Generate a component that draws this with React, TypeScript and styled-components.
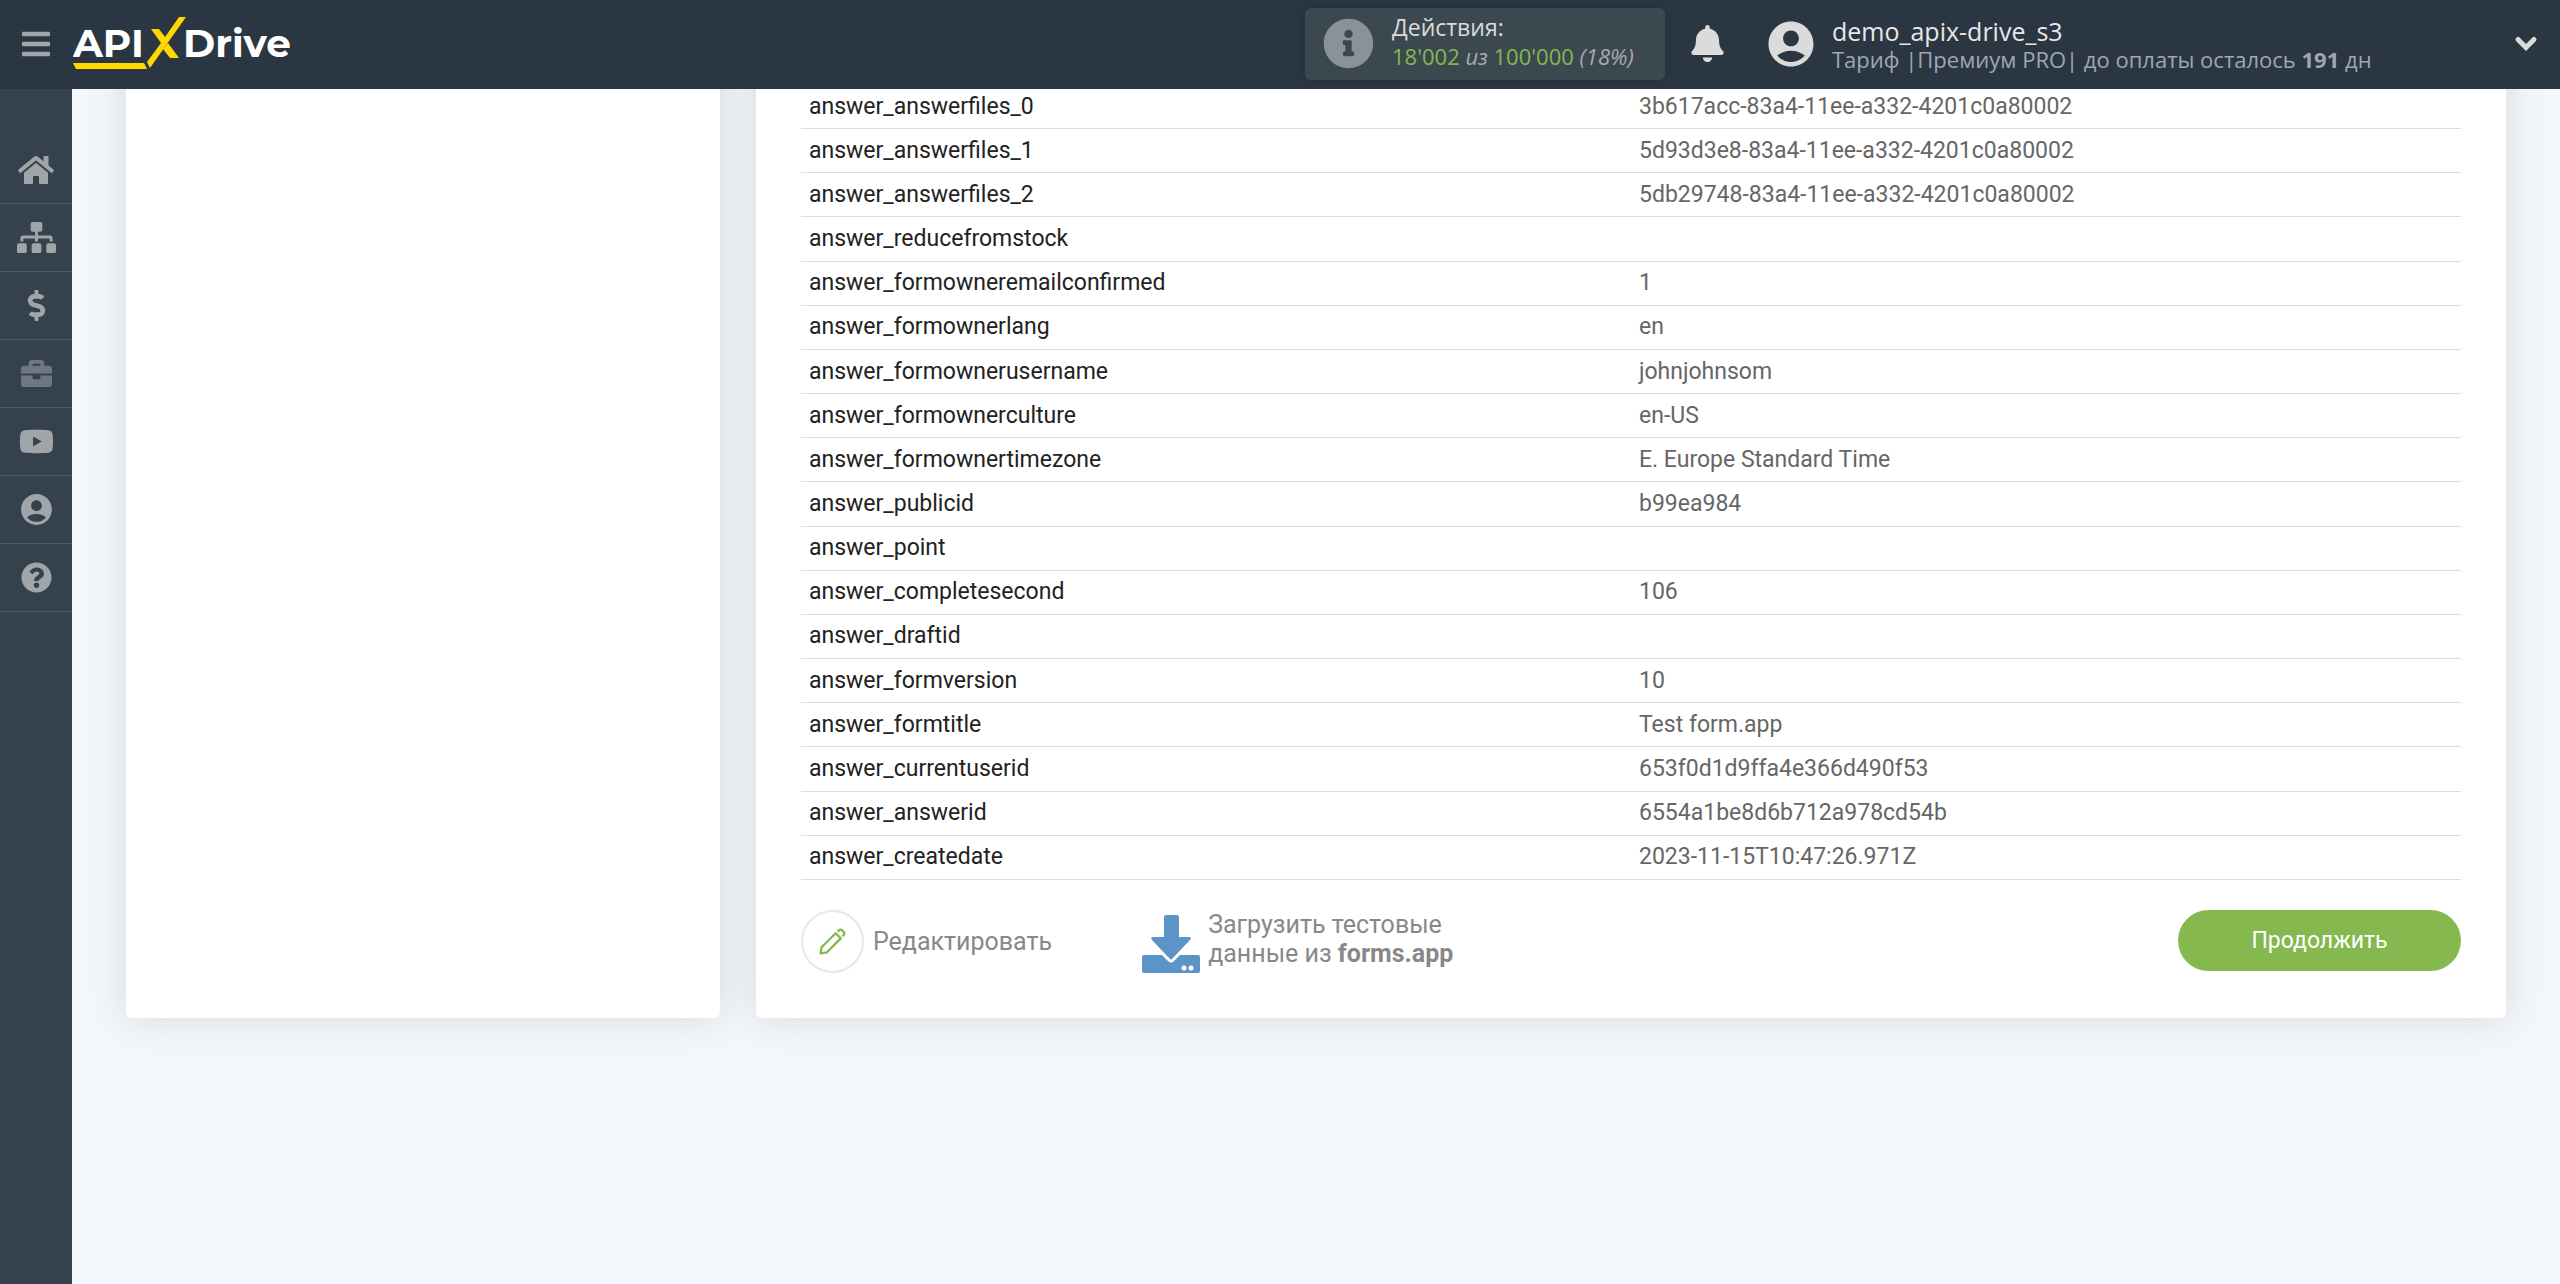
import React from "react";
import styled, { createGlobalStyle } from "styled-components";
import {
  FaBars,
  FaBell,
  FaBriefcase,
  FaDollarSign,
  FaHome,
  FaInfoCircle,
  FaQuestionCircle,
  FaSitemap,
  FaYoutube,
} from "react-icons/fa";
import { MdAccountCircle } from "react-icons/md";

const GlobalStyle = createGlobalStyle`
  *, *::before, *::after { box-sizing: border-box; }
  body {
    margin: 0;
    background: #f3f6fb;
    color: #666;
    font: 25px/36px Roboto, "Open Sans", sans-serif;
  }
  button { font: inherit; color: inherit; border: 0; padding: 0; background: none; cursor: pointer; }
  a { color: inherit; text-decoration: none; }
`;

const Page = styled.div`
  display: flex;
  min-height: 100vh;
`;

const TopBar = styled.header`
  position: fixed;
  z-index: 2;
  inset: 0 0 auto;
  display: flex;
  align-items: center;
  height: 89px;
  padding: 0 22px 2px 20px;
  background: #2b3643;
  color: #dbdbdb;
  font-family: "Open Sans", "Noto Sans", sans-serif;
`;

const MenuButton = styled.button`
  display: flex;
  margin-right: 21px;
  color: #a0a5a9;
`;

const Brand = styled.a`
  display: flex;
  margin-right: auto;
`;

const Usage = styled.section`
  display: flex;
  align-items: center;
  width: 360px;
  height: 72px;
  margin-right: 24px;
  padding-left: 18px;
  gap: 18px;
  border-radius: 6px;
  background: #3b4850;
  box-shadow: 0 0 8px rgba(0, 0, 0, 0.15);
  color: #8a9298;
`;

const UsageText = styled.p`
  margin: 0;
  padding-bottom: 4px;
  color: #dbdbdb;
  font-size: 23px;
  line-height: 29px;
`;

const UsageCount = styled.span`
  display: block;
  color: #84b84f;
  font-size: 22px;
  i { color: #a5aaae; }
`;

const BellButton = styled.button`
  display: flex;
  margin-right: 38px;
`;

const Account = styled.div`
  display: flex;
  align-items: center;
  width: 726px;
  gap: 14px;
`;

const AccountText = styled.div`
  padding-top: 2px;
  color: #a0a7ae;
  font-size: 22px;
  line-height: 28px;
`;

const AccountName = styled.div`
  color: #e8e8e8;
  font-size: 25px;
`;

const ExpandButton = styled.button`
  display: flex;
  margin-left: 24px;
`;

const SideBar = styled.nav`
  flex: none;
  width: 72px;
  padding-top: 136px;
  background: #36414e;
`;

const SideLink = styled.a<{ $dim?: boolean }>`
  display: flex;
  align-items: center;
  justify-content: center;
  height: 68px;
  border-bottom: 1px solid #4b5763;
  color: ${(p) => (p.$dim ? "#6f7882" : "#a0a5a9")};
`;

const Main = styled.main`
  flex: 1;
  display: grid;
  grid-template-columns: 594fr 1750fr;
  gap: 36px;
  align-items: stretch;
  align-self: flex-start;
  padding: 0 54px;
`;

const Card = styled.section`
  padding: 85px 45px 45px;
  border-radius: 6px;
  background: #fff;
  box-shadow: 0 0 40px rgba(0, 0, 0, 0.12);
`;

const DataTable = styled.table`
  width: 100%;
  height: 795px;
  border-collapse: separate;
  border-spacing: 0;
  table-layout: fixed;
  font-size: 23px;
  line-height: 30px;
  text-align: left;
`;

const Cell = styled.td`
  padding: 0 8px;
  border-bottom: 1px solid #ddd;
`;

const KeyCell = styled(Cell)`
  color: #222;
  font-weight: 400;
`;

const Actions = styled.div`
  display: flex;
  align-items: flex-start;
  padding-top: 30px;
  color: #888;
`;

const EditButton = styled.button`
  display: flex;
  align-items: center;
  gap: 9px;
  margin-right: 90px;
`;

const PencilRing = styled.span`
  display: flex;
  align-items: center;
  justify-content: center;
  width: 63px;
  height: 63px;
  border: 2px solid #e0eaea;
  border-radius: 50%;
`;

const LoadButton = styled.button`
  display: flex;
  align-items: flex-end;
  height: 63px;
  gap: 8px;
  line-height: 29px;
  text-align: left;
`;

const LoadText = styled.span`
  padding-bottom: 5px;
`;

const ContinueButton = styled.button`
  width: 283px;
  height: 61px;
  margin-left: auto;
  border-radius: 31px;
  background: #85b94f;
  color: #fff;
  font-size: 23px;
`;

const rows: [string, string][] = [
  ["answer_answerfiles_0", "3b617acc-83a4-11ee-a332-4201c0a80002"],
  ["answer_answerfiles_1", "5d93d3e8-83a4-11ee-a332-4201c0a80002"],
  ["answer_answerfiles_2", "5db29748-83a4-11ee-a332-4201c0a80002"],
  ["answer_reducefromstock", ""],
  ["answer_formowneremailconfirmed", "1"],
  ["answer_formownerlang", "en"],
  ["answer_formownerusername", "johnjohnsom"],
  ["answer_formownerculture", "en-US"],
  ["answer_formownertimezone", "E. Europe Standard Time"],
  ["answer_publicid", "b99ea984"],
  ["answer_point", ""],
  ["answer_completesecond", "106"],
  ["answer_draftid", ""],
  ["answer_formversion", "10"],
  ["answer_formtitle", "Test form.app"],
  ["answer_currentuserid", "653f0d1d9ffa4e366d490f53"],
  ["answer_answerid", "6554a1be8d6b712a978cd54b"],
  ["answer_createdate", "2023-11-15T10:47:26.971Z"],
];

const links = [
  { label: "Главная", icon: <FaHome size={36} /> },
  { label: "Связи", icon: <FaSitemap size={39} /> },
  { label: "Оплата", icon: <FaDollarSign size={31} /> },
  { label: "Услуги", icon: <FaBriefcase size={31} />, dim: true },
  { label: "Видео", icon: <FaYoutube size={35} /> },
  { label: "Профиль", icon: <MdAccountCircle size={37} /> },
  { label: "Помощь", icon: <FaQuestionCircle size={31} /> },
];

function Logo() {
  return (
    <svg width="224" height="58" viewBox="73 14 224 58" role="img" aria-label="APIXDrive">
      <g fill="#fff" fontFamily="Montserrat, Inter, sans-serif" fontWeight="700" fontSize="39">
        <text x="73" y="56">API</text>
        <text x="183" y="56">Drive</text>
      </g>
      <g fill="#ffd800">
        <path d="M73 62H144L147 68H76Z" />
        <path d="M179 16H186L150 67L147 61L161 42L151 28H159L165 36Z" />
        <path d="M168 42L179 57H170L163 48Z" />
      </g>
    </svg>
  );
}

function Chevron() {
  return (
    <svg width="24" height="24" viewBox="0 0 24 24" fill="none" stroke="currentColor" strokeWidth="5" strokeLinecap="round" strokeLinejoin="miter" aria-hidden="true">
      <path d="M4 7.500L12 15.500L20 7.500" />
    </svg>
  );
}

function Pencil() {
  return (
    <svg width="27" height="27" viewBox="0 0 26 26" fill="none" stroke="#85b94f" strokeWidth="2.200" strokeLinejoin="round" aria-hidden="true">
      <path d="M1.500 24.500L2.500 18.500L16 5L21 10L7.500 23.500Z" />
      <path d="M18 3.500L19.500 2Q21 1 22.500 2.500L23.500 3.500Q25 5 24 6.500L22.500 8" />
    </svg>
  );
}

function Download() {
  return (
    <svg width="58" height="58" viewBox="0 0 58 58" fill="#5d94c8" aria-hidden="true">
      <path d="M24 0H35Q37 0 37 2V22H47Q50 22 48 25L30 44Q29 45 28 44L10 25Q8 22 11 22H22V2Q22 0 24 0Z" />
      <path d="M2 40H20L26 46Q29 49 32 46L38 40H56Q58 40 58 42V56Q58 58 56 58H2Q0 58 0 56V42Q0 40 2 40Z" />
      <circle cx="42" cy="53" r="2.500" fill="#fff" />
      <circle cx="49" cy="53" r="2.500" fill="#fff" />
    </svg>
  );
}

export default function App() {
  return (
    <>
      <GlobalStyle />
      <TopBar>
        <MenuButton aria-label="Меню"><FaBars size={32} /></MenuButton>
        <Brand href="#" aria-label="APIXDrive"><Logo /></Brand>
        <Usage>
          <FaInfoCircle size={51} />
          <UsageText>
            Действия:
            <UsageCount>18'002 <i>из</i> 100'000 <i>(18%)</i></UsageCount>
          </UsageText>
        </Usage>
        <BellButton aria-label="Уведомления"><FaBell size={37} /></BellButton>
        <Account>
          <MdAccountCircle size={54} />
          <AccountText>
            <AccountName>demo_apix-drive_s3</AccountName>
            Тариф |Премиум PRO| до оплаты осталось <b>191</b> дн
          </AccountText>
        </Account>
        <ExpandButton aria-label="Развернуть"><Chevron /></ExpandButton>
      </TopBar>
      <Page>
        <SideBar>
          {links.map((l) => (
            <SideLink key={l.label} href="#" aria-label={l.label} $dim={l.dim}>{l.icon}</SideLink>
          ))}
        </SideBar>
        <Main>
          <Card />
          <Card>
            <DataTable>
              <tbody>
                {rows.map(([name, value]) => (
                  <tr key={name}>
                    <KeyCell as="th" scope="row">{name}</KeyCell>
                    <Cell>{value}</Cell>
                  </tr>
                ))}
              </tbody>
            </DataTable>
            <Actions>
              <EditButton><PencilRing><Pencil /></PencilRing>Редактировать</EditButton>
              <LoadButton>
                <Download />
                <LoadText>Загрузить тестовые<br />данные из <b>forms.app</b></LoadText>
              </LoadButton>
              <ContinueButton>Продолжить</ContinueButton>
            </Actions>
          </Card>
        </Main>
      </Page>
    </>
  );
}
